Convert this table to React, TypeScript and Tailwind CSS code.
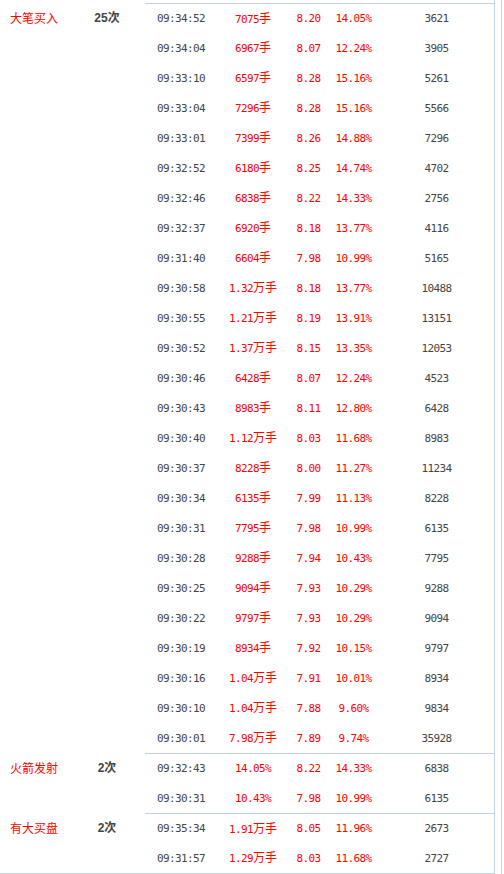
import React from "react";

type Row = [string, string, string, string, string];

const groups: { name: string; count: string; rows: Row[] }[] = [
  {
    name: "大笔买入",
    count: "25",
    rows: [
      ["09:34:52", "7075手", "8.20", "14.05%", "3621"],
      ["09:34:04", "6967手", "8.07", "12.24%", "3905"],
      ["09:33:10", "6597手", "8.28", "15.16%", "5261"],
      ["09:33:04", "7296手", "8.28", "15.16%", "5566"],
      ["09:33:01", "7399手", "8.26", "14.88%", "7296"],
      ["09:32:52", "6180手", "8.25", "14.74%", "4702"],
      ["09:32:46", "6838手", "8.22", "14.33%", "2756"],
      ["09:32:37", "6920手", "8.18", "13.77%", "4116"],
      ["09:31:40", "6604手", "7.98", "10.99%", "5165"],
      ["09:30:58", "1.32万手", "8.18", "13.77%", "10488"],
      ["09:30:55", "1.21万手", "8.19", "13.91%", "13151"],
      ["09:30:52", "1.37万手", "8.15", "13.35%", "12053"],
      ["09:30:46", "6428手", "8.07", "12.24%", "4523"],
      ["09:30:43", "8983手", "8.11", "12.80%", "6428"],
      ["09:30:40", "1.12万手", "8.03", "11.68%", "8983"],
      ["09:30:37", "8228手", "8.00", "11.27%", "11234"],
      ["09:30:34", "6135手", "7.99", "11.13%", "8228"],
      ["09:30:31", "7795手", "7.98", "10.99%", "6135"],
      ["09:30:28", "9288手", "7.94", "10.43%", "7795"],
      ["09:30:25", "9094手", "7.93", "10.29%", "9288"],
      ["09:30:22", "9797手", "7.93", "10.29%", "9094"],
      ["09:30:19", "8934手", "7.92", "10.15%", "9797"],
      ["09:30:16", "1.04万手", "7.91", "10.01%", "8934"],
      ["09:30:10", "1.04万手", "7.88", "9.60%", "9834"],
      ["09:30:01", "7.98万手", "7.89", "9.74%", "35928"],
    ],
  },
  {
    name: "火箭发射",
    count: "2",
    rows: [
      ["09:32:43", "14.05%", "8.22", "14.33%", "6838"],
      ["09:30:31", "10.43%", "7.98", "10.99%", "6135"],
    ],
  },
  {
    name: "有大买盘",
    count: "2",
    rows: [
      ["09:35:34", "1.91万手", "8.05", "11.96%", "2673"],
      ["09:31:57", "1.29万手", "8.03", "11.68%", "2727"],
    ],
  },
];

function Txt({ s }: { s: string }) {
  const parts = s.match(/[\u4e00-\u9fff]+|[^\u4e00-\u9fff]+/g) || [];
  return (
    <span className="whitespace-nowrap">
      {parts.map((p, i) =>
        /[\u4e00-\u9fff]/.test(p) ? (
          <span key={i} className="font-['Noto_Sans_CJK_SC',sans-serif] text-[12px]">
            {p}
          </span>
        ) : (
          <span
            key={i}
            className="font-['DejaVu_Sans_Mono',monospace] text-[11px] tracking-[-0.62px]"
          >
            {p}
          </span>
        )
      )}
    </span>
  );
}

export default function App() {
  return (
    <div className="w-[504px] h-[874px] bg-white flex overflow-hidden">
      <div className="w-[495px] h-[874px] border-r border-b border-[#c0d3e3] pt-[3px] flex flex-col">
        {groups.map((g, gi) => (
          <div key={gi} className="flex">
            <div className="w-[145px] shrink-0 h-[30px] flex items-center text-[12px] leading-[14px]">
              <div className="w-[80px] pl-[10px] text-[#ff0000] font-['Noto_Sans_CJK_SC',sans-serif]">
                {g.name}
              </div>
              <div className="w-[54px] text-center font-bold text-[#444] font-['Liberation_Sans','Noto_Sans_CJK_SC',sans-serif]">
                {g.count}次
              </div>
            </div>
            <div className="flex-1 flex flex-col">
              {g.rows.map((r, ri) => (
                <div
                  key={ri}
                  className={
                    ri === 0
                      ? "h-[30px] grid grid-cols-[72px_72px_39px_51px_1fr] items-center text-center text-[12px] leading-[14px] border-t border-[#c0d3e3]"
                      : "h-[30px] grid grid-cols-[72px_72px_39px_51px_1fr] items-center text-center text-[12px] leading-[14px]"
                  }
                >
                  <div className="text-[#444]">
                    <Txt s={r[0]} />
                  </div>
                  <div className="text-[#ff0000]">
                    <Txt s={r[1]} />
                  </div>
                  <div className="text-[#ff0000]">
                    <Txt s={r[2]} />
                  </div>
                  <div className="text-[#ff0000]">
                    <Txt s={r[3]} />
                  </div>
                  <div className="text-[#444]">
                    <Txt s={r[4]} />
                  </div>
                </div>
              ))}
            </div>
          </div>
        ))}
      </div>
      <div className="ml-[6px] w-px h-[874px] bg-[#c0d3e3]" />
    </div>
  );
}
